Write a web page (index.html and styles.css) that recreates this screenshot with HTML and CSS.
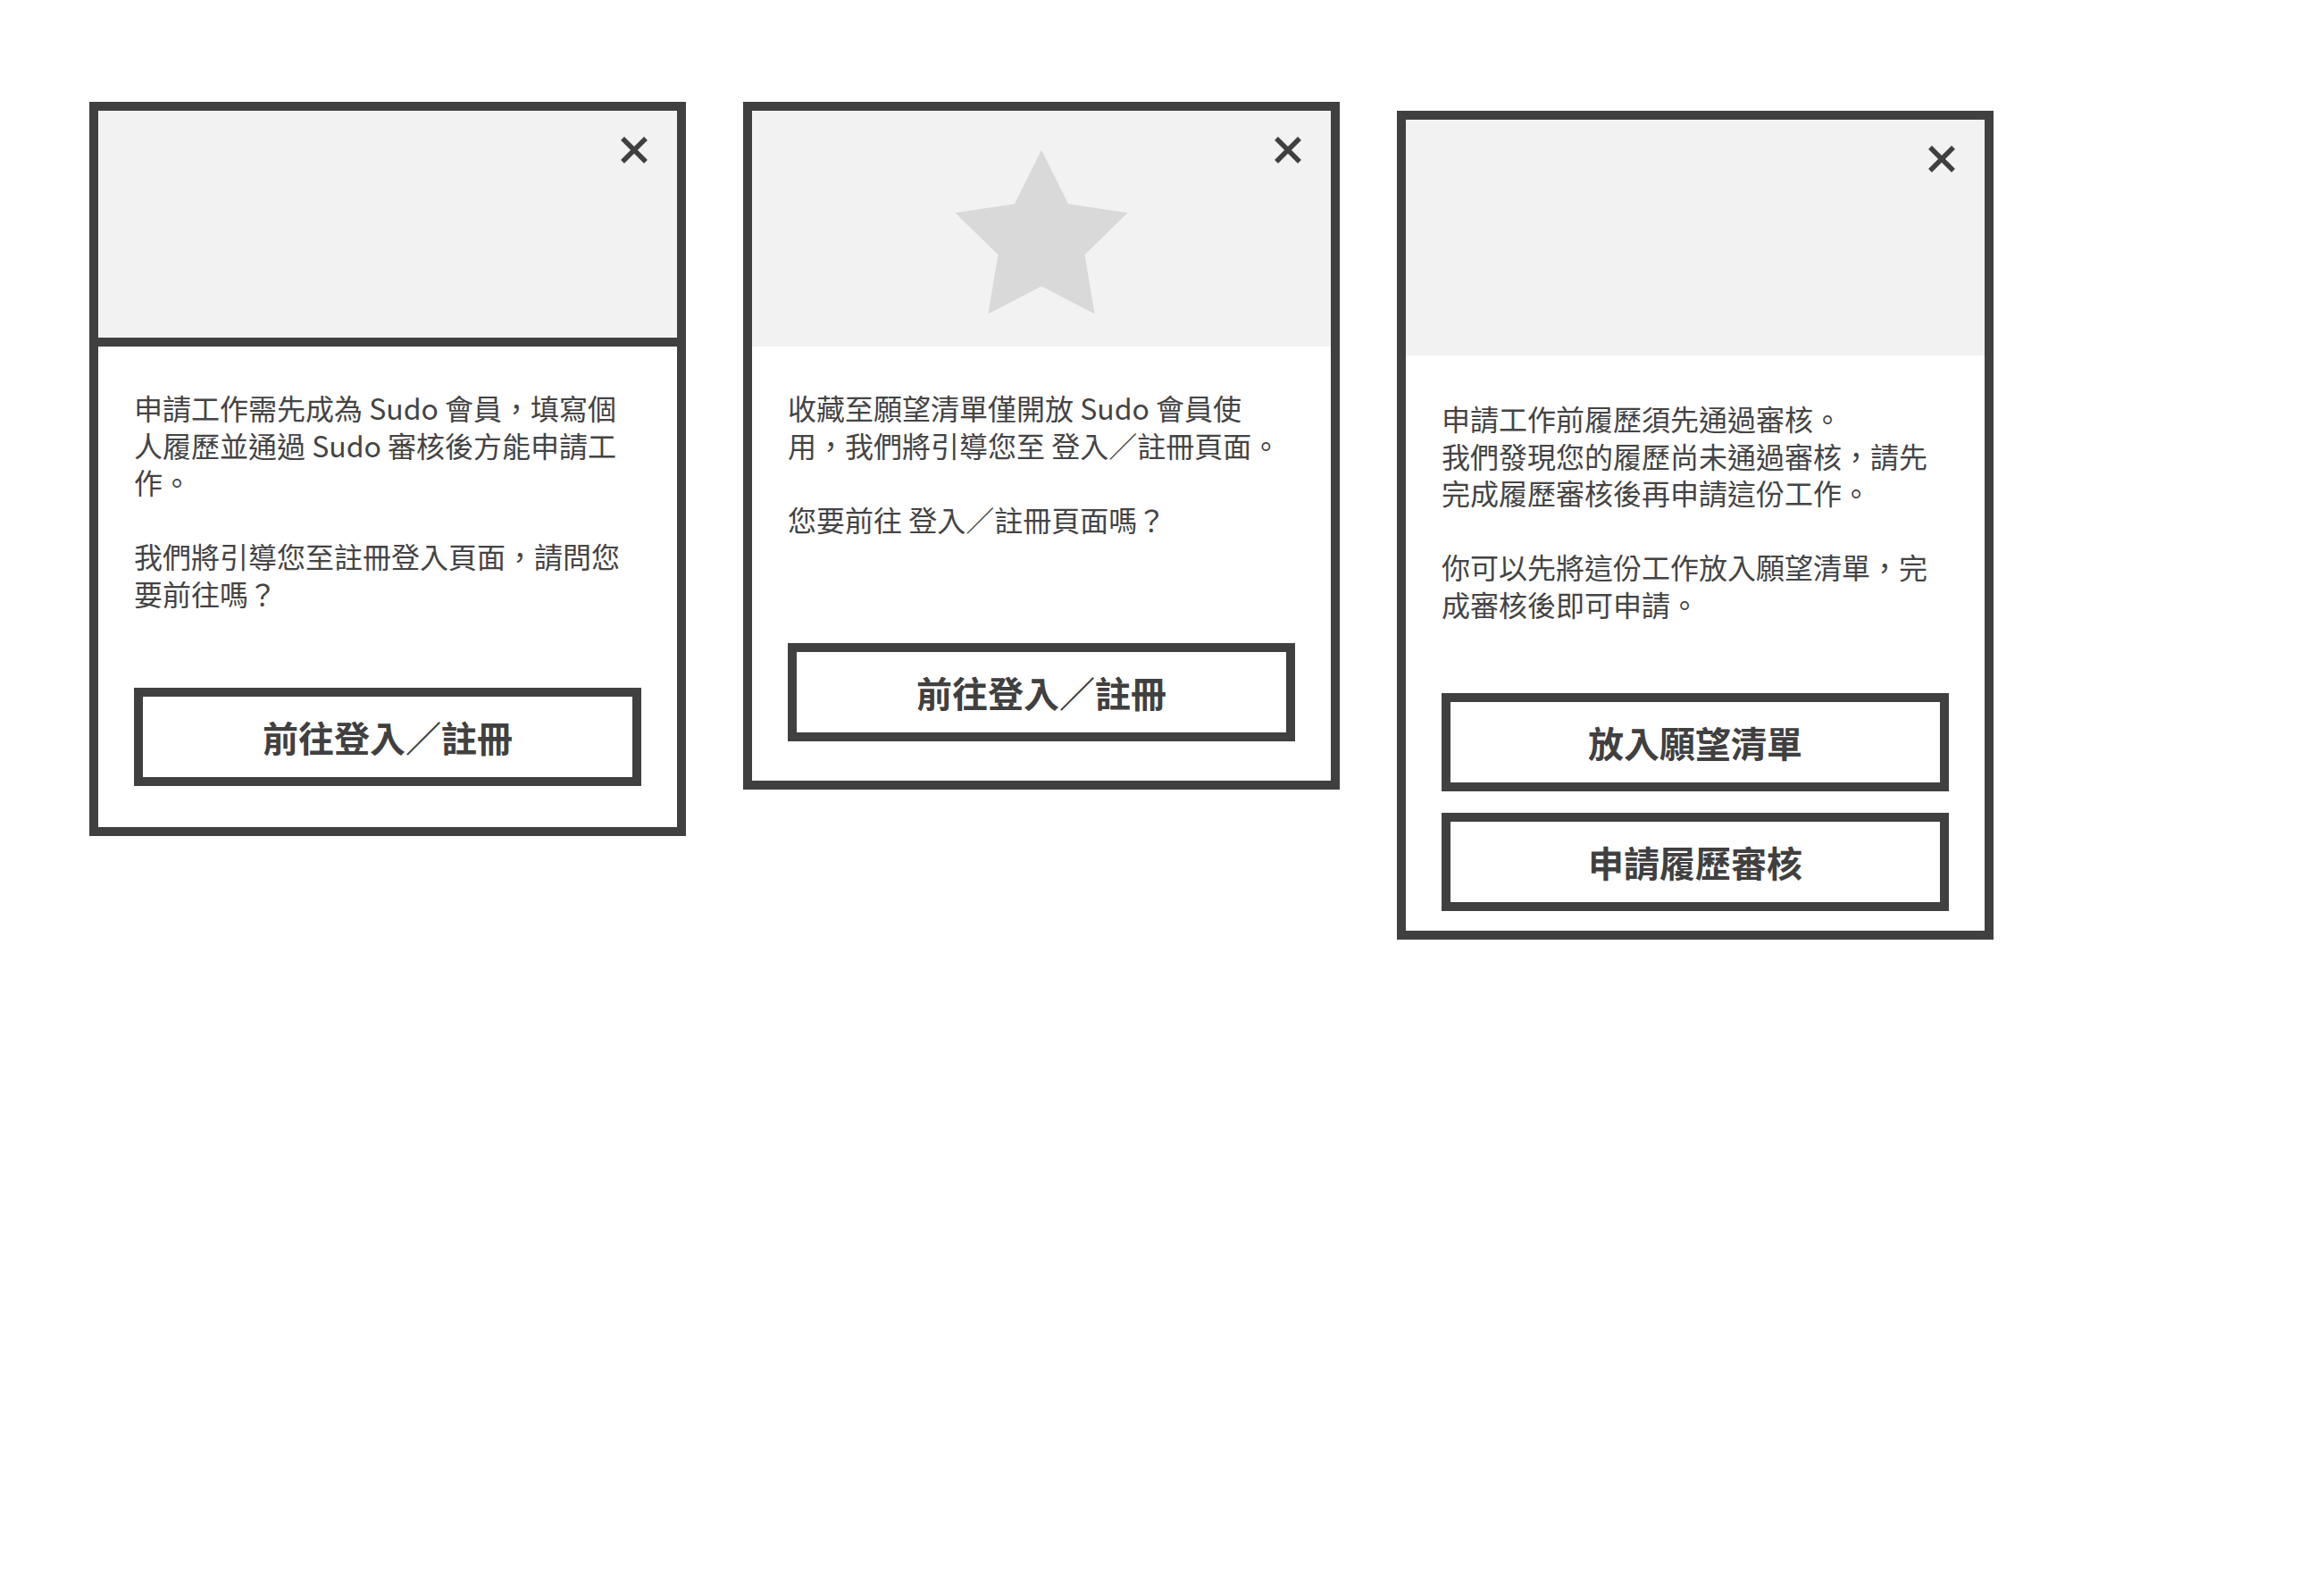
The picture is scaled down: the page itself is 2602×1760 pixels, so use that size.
FILE: index.html
```html
<!DOCTYPE html>
<html lang="zh-Hant">
<head>
<meta charset="utf-8">
<title>Sudo 提示視窗</title>
<link rel="stylesheet" href="styles.css">
</head>
<body>
<div class="board">
  <section class="card card--apply">
    <div class="card__hero card__hero--divided">
      <button class="card__close" aria-label="關閉">
        <svg viewBox="0 0 32 32" width="32" height="32"><path d="M3 3 L29 29 M29 3 L3 29" stroke="#404040" stroke-width="5.5" fill="none"/></svg>
      </button>
    </div>
    <div class="card__body">
      <div class="card__msg">
        <p>申請工作需先成為 Sudo 會員，填寫個人履歷並通過 Sudo 審核後方能申請工作。</p>
        <p>我們將引導您至註冊登入頁面，請問您要前往嗎？</p>
      </div>
      <div class="card__actions">
        <a class="btn">前往登入／註冊</a>
      </div>
    </div>
  </section>

  <section class="card card--wish">
    <div class="card__hero">
      <svg class="card__star" viewBox="-102 -101.5 204 184" width="204" height="184"><polygon fill="#d9d9d9" points="0,-101.5 29.98,-41.26 96.53,-31.37 48.5,15.76 59.66,82.12 0,51 -59.66,82.12 -48.5,15.76 -96.53,-31.37 -29.98,-41.26"/></svg>
      <button class="card__close" aria-label="關閉">
        <svg viewBox="0 0 32 32" width="32" height="32"><path d="M3 3 L29 29 M29 3 L3 29" stroke="#404040" stroke-width="5.5" fill="none"/></svg>
      </button>
    </div>
    <div class="card__body">
      <div class="card__msg">
        <p>收藏至願望清單僅開放 Sudo 會員使用，我們將引導您至 登入／註冊頁面。</p>
        <p>您要前往 登入／註冊頁面嗎？</p>
      </div>
      <div class="card__actions">
        <a class="btn">前往登入／註冊</a>
      </div>
    </div>
  </section>

  <section class="card card--review">
    <div class="card__hero">
      <button class="card__close" aria-label="關閉">
        <svg viewBox="0 0 32 32" width="32" height="32"><path d="M3 3 L29 29 M29 3 L3 29" stroke="#404040" stroke-width="5.5" fill="none"/></svg>
      </button>
    </div>
    <div class="card__body">
      <div class="card__msg">
        <p>申請工作前履歷須先通過審核。<br>我們發現您的履歷尚未通過審核，請先完成履歷審核後再申請這份工作。</p>
        <p>你可以先將這份工作放入願望清單，完成審核後即可申請。</p>
      </div>
      <div class="card__actions">
        <a class="btn">放入願望清單</a>
        <a class="btn">申請履歷審核</a>
      </div>
    </div>
  </section>
</div>
</body>
</html>
```

FILE: styles.css
```css
html, body {
  margin: 0;
  background: #ffffff;
}

body {
  font-family: "Noto Sans CJK TC", "Noto Sans CJK SC", "Noto Sans", sans-serif;
  color: #444444;
}

.board {
  display: flex;
  align-items: flex-start;
  gap: 64px;
  padding: 114px 0 0 100px;
}

.card {
  width: 668px;
  box-sizing: border-box;
  border: 10px solid #404040;
  background: #ffffff;
}

.card--review {
  margin-top: 10px;
}

.card__hero {
  position: relative;
  height: 264px;
  box-sizing: border-box;
  background: #f2f2f2;
  display: flex;
  justify-content: center;
  align-items: flex-start;
  padding-top: 44px;
}

.card__hero--divided {
  border-bottom: 10px solid #404040;
}

.card__star {
  display: block;
}

.card__close {
  position: absolute;
  top: 28px;
  right: 32px;
  width: 32px;
  height: 32px;
  padding: 0;
  border: 0;
  background: none;
  cursor: pointer;
}

.card__close svg {
  display: block;
}

.card__body {
  padding: 48px 40px 46px;
}

.card__msg {
  width: 556px;
  font-size: 32px;
  line-height: 41.6px;
  display: flex;
  flex-direction: column;
  gap: 41.6px;
  margin-bottom: 84.4px;
}

.card__msg p {
  margin: 0;
}

.card--wish .card__body {
  padding-bottom: 44px;
}

.card--wish .card__msg {
  margin-bottom: 117.6px;
}

.card--review .card__body {
  padding-top: 50px;
  padding-bottom: 22px;
}

.card--review .card__msg {
  margin-bottom: 78.4px;
}

.card__actions {
  display: flex;
  flex-direction: column;
  gap: 24px;
}

.btn {
  height: 110px;
  box-sizing: border-box;
  border: 10px solid #404040;
  display: flex;
  align-items: center;
  justify-content: center;
  font-size: 40px;
  font-weight: 700;
  color: #404040;
  cursor: pointer;
}
```
